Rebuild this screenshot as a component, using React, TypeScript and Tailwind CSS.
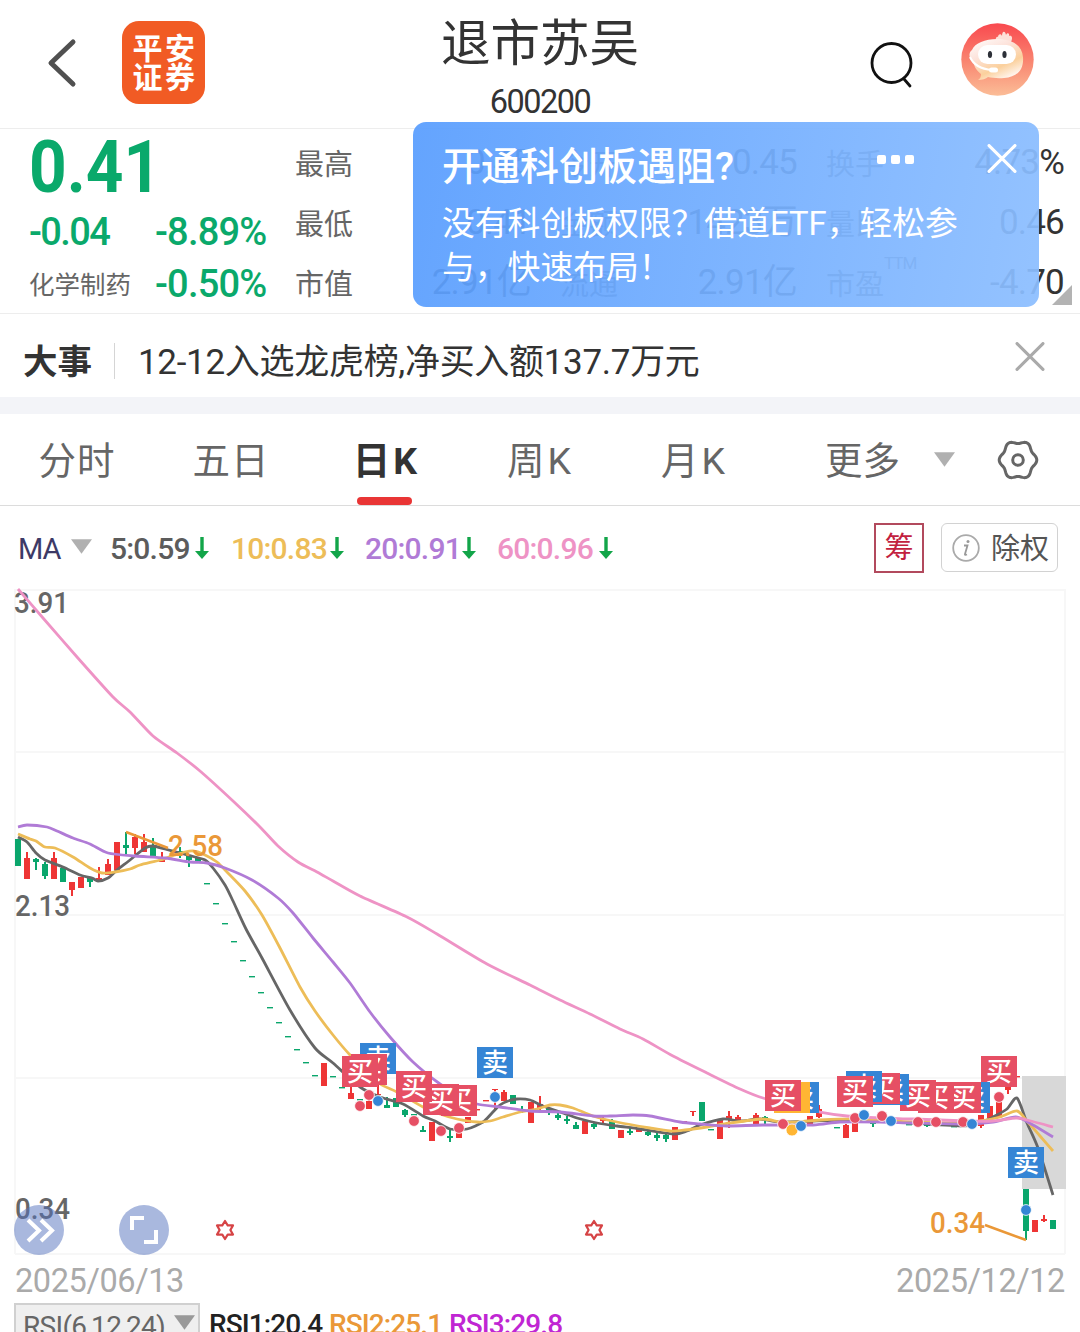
import type { ReactNode } from "react";

type Candle = [x: number, up: 0 | 1, high: number, low: number, top: number, bottom: number];
type Marker = [x: number, y: number, kind: "buy" | "sell" | "both"];

const RED = "#ee3535";
const GREEN = "#0aa66c";

const COLORS = { buy: "#e64f64", sell: "#3585d5", both: "#ffb533" };

const MA60 =
  "18,589 43,618 77,657 113,697 130,712 153,736 177,753 200,771 233,801 260,827 278,846 298,862 317,872 333,881 360,896 407,917 437,934 487,964 530,985 560,1000 590,1014 620,1029 643,1039 673,1056 707,1073 740,1089 763,1098 800,1107 820,1112 847,1116 880,1118 913,1119 967,1121 993,1121 1016,1118 1027,1120 1053,1127";
const MA20 =
  "18,827 27,825 47,827 57,831 73,838 90,844 108,853 135,856 165,858 190,862 207,863 225,868 252,880 278,898 293,913 313,938 333,962 350,983 370,1012 390,1037 413,1062 440,1084 460,1096 477,1104 500,1107 530,1111 560,1112 593,1116 610,1116 633,1115 650,1116 680,1122 700,1124 727,1126 763,1125 813,1125 840,1122 880,1122 913,1123 963,1124 993,1122 1016,1117 1033,1125 1053,1137";
const MA10 =
  "18,834 30,839 36,841 45,847 55,848 73,857 90,868 102,873 115,872 130,869 140,865 160,860 175,855 185,852 193,851 203,854 217,862 227,872 245,891 262,915 280,948 300,987 315,1011 333,1035 350,1055 377,1082 397,1092 423,1107 440,1114 457,1119 477,1122 490,1121 503,1117 520,1112 537,1109 550,1105 560,1105 573,1108 593,1116 617,1122 650,1128 670,1131 685,1130 707,1127 730,1123 763,1119 780,1122 797,1122 820,1120 860,1119 913,1122 963,1123 980,1121 1000,1117 1017,1111 1027,1121 1040,1136 1053,1151";
const MA5 =
  "18,837 27,842 36,853 45,860 63,867 80,875 92,878 98,881 108,878 117,870 130,860 145,848 153,846 165,849 180,853 195,857 205,860 213,868 225,885 233,901 246,929 262,958 290,1010 315,1048 333,1063 360,1087 380,1097 403,1104 423,1116 435,1121 450,1129 467,1129 483,1122 492,1113 500,1105 508,1101 517,1099 530,1100 543,1106 563,1113 577,1118 597,1123 617,1126 640,1129 673,1134 687,1131 700,1125 723,1119 740,1121 760,1119 780,1122 813,1121 847,1120 880,1121 913,1123 963,1126 980,1123 993,1117 1007,1109 1017,1098 1027,1123 1038,1148 1053,1195";

const candles: Candle[] = [
  [18, 0, 839, 866, 839, 866],
  [27, 1, 852, 879, 858, 879],
  [36, 0, 858, 870, 859, 862],
  [45, 0, 862, 879, 864, 876],
  [54, 1, 852, 879, 858, 879],
  [63, 0, 867, 882, 868, 882],
  [72, 1, 882, 896, 882, 890],
  [81, 1, 877, 888, 877, 888],
  [90, 0, 878, 887, 878, 882],
  [99, 1, 867, 882, 878, 882],
  [108, 1, 859, 875, 864, 875],
  [117, 1, 842, 870, 842, 870],
  [126, 0, 832, 855, 845, 848],
  [135, 1, 834, 854, 837, 848],
  [144, 1, 834, 852, 842, 852],
  [153, 0, 838, 858, 846, 858],
  [162, 1, 852, 862, 858, 862],
  [180, 0, 847, 858, 851, 855],
  [189, 0, 855, 867, 856, 860],
  [198, 0, 857, 862, 858, 862],
  [324, 1, 1063, 1086, 1063, 1086],
  [351, 1, 1085, 1099, 1093, 1099],
  [369, 1, 1095, 1109, 1101, 1109],
  [378, 1, 1082, 1095, 1094, 1095],
  [387, 0, 1097, 1108, 1105, 1108],
  [396, 0, 1098, 1107, 1098, 1107],
  [405, 0, 1109, 1117, 1110, 1115],
  [423, 0, 1126, 1132, 1130, 1132],
  [432, 1, 1122, 1141, 1122, 1141],
  [450, 0, 1128, 1142, 1136, 1138],
  [459, 1, 1130, 1138, 1133, 1138],
  [468, 1, 1117, 1123, 1117, 1123],
  [495, 1, 1089, 1110, 1089, 1090],
  [504, 1, 1090, 1101, 1092, 1101],
  [513, 0, 1095, 1104, 1095, 1104],
  [522, 0, 1106, 1113, 1109, 1111],
  [531, 1, 1102, 1123, 1102, 1123],
  [540, 1, 1096, 1111, 1104, 1108],
  [549, 0, 1107, 1115, 1108, 1112],
  [558, 0, 1113, 1120, 1115, 1118],
  [567, 0, 1116, 1124, 1119, 1121],
  [576, 0, 1122, 1129, 1125, 1129],
  [585, 1, 1121, 1134, 1121, 1134],
  [594, 0, 1123, 1129, 1124, 1127],
  [603, 1, 1117, 1123, 1119, 1121],
  [612, 0, 1119, 1129, 1121, 1129],
  [621, 1, 1130, 1138, 1130, 1138],
  [630, 0, 1128, 1135, 1131, 1133],
  [639, 1, 1128, 1132, 1129, 1132],
  [648, 0, 1130, 1136, 1132, 1135],
  [657, 0, 1133, 1141, 1135, 1138],
  [666, 0, 1133, 1142, 1135, 1139],
  [675, 1, 1127, 1140, 1127, 1140],
  [693, 1, 1111, 1116, 1111, 1112],
  [702, 0, 1102, 1121, 1102, 1121],
  [720, 1, 1120, 1139, 1120, 1139],
  [729, 1, 1111, 1128, 1116, 1120],
  [738, 1, 1115, 1122, 1117, 1122],
  [756, 1, 1113, 1124, 1115, 1124],
  [765, 0, 1116, 1124, 1117, 1118],
  [810, 1, 1116, 1126, 1116, 1126],
  [819, 1, 1105, 1118, 1109, 1117],
  [846, 1, 1124, 1138, 1125, 1138],
  [855, 1, 1122, 1132, 1122, 1132],
  [873, 0, 1122, 1127, 1123, 1124],
  [927, 0, 1122, 1127, 1124, 1126],
  [981, 1, 1115, 1128, 1115, 1126],
  [990, 1, 1106, 1118, 1106, 1118],
  [999, 1, 1102, 1117, 1102, 1117],
  [1008, 1, 1086, 1094, 1087, 1090],
  [1026, 0, 1189, 1240, 1189, 1231],
  [1035, 1, 1220, 1232, 1220, 1232],
  [1044, 1, 1215, 1222, 1219, 1221],
  [1053, 0, 1220, 1229, 1220, 1229],
];

// sesiones sin rango: solo un guion horizontal
const flats: [number, number, 0 | 1][] = [
  [207, 883, 0],
  [216, 903, 0],
  [225, 923, 0],
  [234, 941, 0],
  [243, 960, 0],
  [252, 976, 0],
  [261, 992, 0],
  [270, 1007, 0],
  [279, 1022, 0],
  [288, 1036, 0],
  [297, 1049, 0],
  [306, 1062, 0],
  [315, 1075, 0],
  [333, 1076, 0],
  [342, 1087, 0],
  [360, 1099, 0],
  [414, 1114, 0],
  [477, 1109, 1],
  [486, 1100, 1],
  [684, 1121, 1],
  [711, 1129, 0],
  [747, 1120, 0],
  [837, 1127, 0],
  [909, 1124, 0],
  [954, 1126, 0],
  [1017, 1076, 1],
];

const dots: Marker[] = [
  [360, 1106, "buy"],
  [369, 1095, "buy"],
  [378, 1101, "sell"],
  [414, 1121, "buy"],
  [441, 1131, "buy"],
  [459, 1128, "buy"],
  [495, 1097, "sell"],
  [783, 1124, "buy"],
  [792, 1130, "both"],
  [801, 1126, "sell"],
  [855, 1118, "buy"],
  [864, 1115, "sell"],
  [882, 1116, "buy"],
  [891, 1121, "sell"],
  [918, 1122, "buy"],
  [936, 1122, "buy"],
  [963, 1122, "buy"],
  [972, 1124, "sell"],
  [999, 1097, "buy"],
  [1026, 1210, "sell"],
];

const flags: Marker[] = [
  [1008, 1147, "sell"],
  [981, 1056, "buy"],
  [954, 1082, "sell"],
  [945, 1082, "buy"],
  [918, 1082, "buy"],
  [900, 1080, "buy"],
  [873, 1074, "sell"],
  [864, 1073, "buy"],
  [846, 1071, "sell"],
  [837, 1076, "buy"],
  [783, 1082, "sell"],
  [774, 1082, "both"],
  [765, 1080, "buy"],
  [477, 1047, "sell"],
  [441, 1085, "buy"],
  [423, 1084, "buy"],
  [396, 1071, "buy"],
  [360, 1043, "sell"],
  [351, 1054, "buy"],
  [342, 1056, "buy"],
];

const stats = [
  { label: "最高", value: "0.45" },
  { label: "今开", value: "0.45" },
  { label: "换手", value: "4.73%" },
  { label: "最低", value: "0.41" },
  { label: "金额", value: "1423万" },
  { label: "量比", value: "0.46" },
  { label: "市值", value: "2.91亿" },
  { label: "流通", value: "2.91亿" },
  { label: "市盈", value: "-4.70", sup: "TTM" },
];

const averages = [
  { text: "5:0.59", className: "w-[79px] text-[#5c5c5c]", arrow: "ml-[6px] mr-[22px]" },
  { text: "10:0.83", className: "w-[96px] text-[#edbd58]", arrow: "ml-[3px] mr-[21px]" },
  { text: "20:0.91", className: "w-[96px] text-[#b07bd6]", arrow: "ml-[1px] mr-[21px]" },
  { text: "60:0.96", className: "w-[96px] text-[#ee93c5]", arrow: "ml-[6px]" },
];

const tabs = ["分时", "五日", "日K", "周K", "月K"];

// Catmull-Rom a Bézier, para que las medias no se vean quebradas
function smooth(points: string) {
  const p = points.split(" ").map((s) => s.split(",").map(Number));
  let d = `M${p[0][0]} ${p[0][1]}`;
  for (let i = 0; i < p.length - 1; i++) {
    const a = p[i - 1] ?? p[i];
    const b = p[i];
    const c = p[i + 1];
    const e = p[i + 2] ?? c;
    d += `C${b[0] + (c[0] - a[0]) / 8} ${b[1] + (c[1] - a[1]) / 8} ${c[0] - (e[0] - b[0]) / 8} ${c[1] - (e[1] - b[1]) / 8} ${c[0]} ${c[1]}`;
  }
  return d;
}

// contorno de seis lóbulos del engranaje
const gear =
  "M" +
  Array.from({ length: 72 }, (_, i) => {
    const t = (i * Math.PI) / 36;
    const r = 17.3 + 1.5 * Math.cos(6 * t);
    return `${(21 + r * Math.cos(t)).toFixed(2)} ${(21 + 1.04 * r * Math.sin(t)).toFixed(2)}`;
  }).join("L") +
  "z";

function Cross({ className }: { className: string }) {
  return (
    <svg viewBox="0 0 28 28" className={className} fill="none" stroke="currentColor" strokeLinecap="round">
      <path d="M1.500 1.500 26.500 26.500M26.500 1.500 1.500 26.500" />
    </svg>
  );
}

function Caret({ className }: { className: string }) {
  return (
    <svg viewBox="0 0 22 15" className={className} fill="currentColor">
      <path d="M0 0h22L11 15z" />
    </svg>
  );
}

function Avatar() {
  return (
    <svg viewBox="0 0 73 73" className="h-[73px] w-[73px]">
      <defs>
        <linearGradient id="sky" x1="0" y1="0" x2="0" y2="1">
          <stop offset="0" stopColor="#f9494f" />
          <stop offset="0.55" stopColor="#f98872" />
          <stop offset="1" stopColor="#fbbd97" />
        </linearGradient>
        <linearGradient id="head" x1="0" y1="0" x2="0.6" y2="1">
          <stop offset="0" stopColor="#fff" />
          <stop offset="0.4" stopColor="#fde3db" />
          <stop offset="0.75" stopColor="#fbd09c" />
          <stop offset="1" stopColor="#fff3ea" />
        </linearGradient>
      </defs>
      <circle cx="36.5" cy="36.5" r="36.2" fill="url(#sky)" />
      <path d="M35 18c-1-3 1-5 2-4 0-3 3-4 4-1 0-5 3-6 4-1 1-3 4-2 3 1 3-1 4 2 2 6z" fill="#fde0d8" />
      <path
        d="M11 27c3-7 13-11 25-11 15 0 25 6 26 18 1 13-6 20-19 21-6 .5-12 0-16-1-2 2-6 3-10 3 2-1 3-3 3-6-5-4-7-8-8-13-4-2-5-8-1-11z"
        fill="url(#head)"
      />
      <rect x="17" y="22" width="38" height="19" rx="9.5" fill="#fff" />
      <ellipse cx="29" cy="31.5" rx="2.1" ry="3.600" fill="#2d3038" />
      <ellipse cx="43.500" cy="31.5" rx="2.1" ry="3.600" fill="#2d3038" />
      <path d="M9 34c3 7 11 12 22 13" fill="none" stroke="#fff" strokeWidth="2" />
      <rect x="28" y="44.500" width="9" height="5" rx="2.500" fill="#fff" />
    </svg>
  );
}

function Header() {
  return (
    <header className="grid h-[129px] grid-cols-[1fr_auto_1fr] border-b border-[#ededed]">
      <div className="flex items-start pl-[47px]">
        <svg viewBox="0 0 30 50" className="mt-[38px] h-[50px] w-[30px]" fill="none" stroke="#505050" strokeWidth="5" strokeLinecap="round">
          <path d="M26 4 4 25 26 46" strokeLinejoin="round" />
        </svg>
        <div className="mt-[21px] ml-[45px] flex h-[83px] w-[83px] flex-col items-center justify-center rounded-[17px] bg-[#f15b24] text-[30px] leading-[29px] font-bold tracking-[2.5px] text-white">
          <span className="pl-[3px]">平安</span>
          <span className="pl-[3px]">证券</span>
        </div>
      </div>
      <div className="flex flex-col items-center">
        <h1 className="mt-[14px] text-[49.5px] leading-[60px] text-[#333]">退市苏吴</h1>
        <p className="mt-[10px] text-[32.5px] leading-[36px] tracking-[-1.5px] text-[#333]">600200</p>
      </div>
      <div className="flex items-start justify-end pr-[46px]">
        <svg viewBox="0 0 46 48" className="mt-[41px] h-[48px] w-[46px]" fill="none" stroke="#111" strokeWidth="2.800" strokeLinecap="round">
          <circle cx="22.500" cy="22" r="19.500" />
          <path d="m35 38 6 7" />
        </svg>
        <div className="mt-[23px] ml-[46px]">
          <Avatar />
        </div>
      </div>
    </header>
  );
}

function Promo() {
  return (
    <div className="absolute top-[-7px] left-[413px] h-[185px] w-[626px] rounded-[13px] bg-linear-100 from-[#589dfe]/93 to-[#8cbeff]/93 pl-[29px] text-white">
      <div className="flex h-[76px] items-center pt-[10px]">
        <h2 className="w-[435px] pt-[4px] text-[39px] leading-[48px] font-medium whitespace-nowrap">开通科创板遇阻?</h2>
        <div className="-mt-[12px] flex gap-[5px]">
          <i className="h-[9px] w-[9px] rounded-[2px] bg-white" />
          <i className="h-[9px] w-[9px] rounded-[2px] bg-white" />
          <i className="h-[9px] w-[9px] rounded-[2px] bg-white" />
        </div>
        <Cross className="-mt-[13px] ml-[73px] h-[29px] w-[30px] stroke-3" />
      </div>
      <p className="w-[560px] pt-[4px] text-[32.8px] leading-[44px] whitespace-nowrap">
        没有科创板权限？借道ETF，轻松参
        <br />
        与，快速布局！
      </p>
    </div>
  );
}

function Quote() {
  return (
    <section className="relative flex h-[185px] border-b border-[#ededed]">
      <div className="w-[295px] pl-[29px] text-[#0aa96b]">
        <div className="h-[77px]">
          <span className="inline-block origin-left scale-x-[0.9] text-[73px] leading-[76px] font-bold">0.41</span>
        </div>
        <div className="flex h-[52px] items-center text-[38px] font-medium tracking-[-0.8px]">
          <span className="w-[126px] tracking-[-1.6px]">-0.04</span>
          <span>-8.89%</span>
        </div>
        <div className="flex h-[52px] items-center text-[38px] font-medium tracking-[-0.8px]">
          <span className="w-[126px] pt-[2px] text-[25.5px] font-normal tracking-normal text-[#666]">化学制药</span>
          <span>-0.50%</span>
        </div>
      </div>
      <dl className="grid h-[184px] grid-cols-[236px_237px_238px] grid-rows-[60px_60px_60px] gap-x-[29px] pt-[4px]">
        {stats.map((s) => (
          <div key={s.label} className="flex items-center justify-between">
            <dt className="pt-[5px] text-[29px] text-[#666]">
              {s.label}
              {s.sup && <sup className="-top-[26px] text-[17px] tracking-[-1px]">{s.sup}</sup>}
            </dt>
            <dd className="pt-[1px] text-[35px] tracking-[-0.8px] text-[#333]">{s.value}</dd>
          </div>
        ))}
      </dl>
      <svg viewBox="0 0 20 20" className="absolute right-[8px] bottom-[8px] h-[20px] w-[20px]" fill="#b3b3b3">
        <path d="M20 0v20H0z" />
      </svg>
      <Promo />
    </section>
  );
}

function News() {
  return (
    <section className="flex h-[83px] items-center pt-[11px] pr-[35px] pl-[23px] text-[#333]">
      <strong className="pt-[4px] text-[34.5px] font-bold">大事</strong>
      <i className="mr-[23px] ml-[22px] h-[36px] w-px bg-[#d5d5d5]" />
      <p className="grow pt-[4px] text-[35px] tracking-[-0.3px] whitespace-nowrap">12-12入选龙虎榜,净买入额137.7万元</p>
      <Cross className="-mt-[10px] h-[29px] w-[30px] stroke-3 text-[#aaa]" />
    </section>
  );
}

function Tabs() {
  return (
    <nav className="flex h-[92px] border-b border-[#dcdcdc] text-[37.5px] text-[#666]">
      {tabs.map((t) => (
        <div
          key={t}
          className={`relative flex w-[154px] items-center justify-center pt-[3px] ${
            t === "日K" ? "font-bold text-[#333]" : ""
          } ${t.endsWith("K") ? "pl-[3px] tracking-[3px]" : "tracking-[1px]"}`}
        >
          {t}
          {t === "日K" && <i className="absolute bottom-0 left-[49px] h-[8px] w-[55px] rounded-[4px] bg-[#e93535]" />}
        </div>
      ))}
      <div className="flex items-center pl-[55px]">
        <span className="pt-[3px]">更多</span>
        <Caret className="ml-[34px] h-[15px] w-[21px] text-[#b0b0b0]" />
        <svg viewBox="0 0 42 42" className="ml-[42px] h-[42px] w-[42px]" fill="none" stroke="#666" strokeWidth="3" strokeLinejoin="round">
          <path d={gear} />
          <circle cx="21" cy="21" r="5.300" />
        </svg>
      </div>
    </nav>
  );
}

function Averages() {
  return (
    <div className="flex h-[82px] items-center pt-[1px] pr-[22px] pl-[18px] text-[30px]">
      <span className="w-[53px] pt-[4px] text-[29px] tracking-[-1px] text-[#3d3a66]">MA</span>
      <Caret className="-mt-[3px] mr-[18px] h-[15px] w-[21px] text-[#b0b0b0]" />
      {averages.map((a) => (
        <div key={a.text} className="flex items-center">
          <span className={`pt-[1px] font-medium tracking-[-0.8px] whitespace-nowrap ${a.className}`}>{a.text}</span>
          <svg viewBox="0 0 14 22" className={`h-[22px] w-[14px] ${a.arrow}`}>
            <path d="M5.300 0h3.400v14H14l-7 8-7-8h5.300z" fill="#12a549" />
          </svg>
        </div>
      ))}
      <span className="ml-auto flex h-[50px] w-[50px] items-center justify-center border-2 border-[#b24a5d] pt-[3px] text-[29px] text-[#c2213f]">
        筹
      </span>
      <span className="ml-[17px] flex h-[49px] w-[117px] items-center rounded-[6px] border-[1.500px] border-[#d2d2d2] pl-[10px] text-[29px] text-[#555]">
        <svg viewBox="0 0 28 28" className="mr-[11px] h-[28px] w-[28px]">
          <circle cx="14" cy="14" r="12.800" fill="none" stroke="#aaa" strokeWidth="1.800" />
          <path d="M12 11.500h3.500L13 20q-.4 1.500 2 .5" fill="none" stroke="#999" strokeWidth="1.800" />
          <circle cx="16" cy="7.500" r="1.500" fill="#999" />
        </svg>
        <span className="pt-[4px]">除权</span>
      </span>
    </div>
  );
}

function Line({ points, color }: { points: string; color: string }) {
  return <path d={smooth(points)} fill="none" stroke={color} strokeWidth="2.800" strokeLinejoin="round" />;
}

function AxisLabel({ x, y, fill, children }: { x: number; y: number; fill: string; children: ReactNode }) {
  return (
    <text x={x} y={y} fill={fill} textLength="55" lengthAdjust="spacingAndGlyphs" className="text-[30px] font-medium">
      {children}
    </text>
  );
}

function Chart() {
  return (
    <svg viewBox="0 588 1080 674" className="block h-[674px] w-[1080px]">
      <g stroke="#f7f7f7" strokeWidth="2">
        <path d="M15 590H1065M15 752H1065M15 915H1065M15 1078H1065M15 1254H1065M15 589V1254M1065 589V1254" />
      </g>
      <rect x="1022" y="1076" width="44" height="113" fill="#d8d8d8" />

      <AxisLabel x={14} y={613} fill="#666">3.91</AxisLabel>
      <AxisLabel x={15} y={916} fill="#666">2.13</AxisLabel>
      <AxisLabel x={15} y={1219} fill="#666">0.34</AxisLabel>

      {candles.map(([x, up, high, low, top, bottom]) => (
        <g key={x} fill={up ? RED : GREEN}>
          <rect x={x - 1} y={high} width="2" height={low - high} />
          <rect x={x - 3} y={top} width="6" height={bottom - top} />
        </g>
      ))}
      {flats.map(([x, y, up]) => (
        <rect key={x} x={x - 3} y={y} width="6" height="1.400" fill={up ? RED : GREEN} />
      ))}

      <Line points={MA5} color="#666" />
      <Line points={MA10} color="#edbd58" />
      <Line points={MA20} color="#b07bd6" />
      <Line points={MA60} color="#ee93c5" />

      <g stroke="#ea9838" strokeWidth="2.600">
        <path d="M126 832 168 848M985 1225 1026 1240" />
      </g>
      <AxisLabel x={168} y={856} fill="#ea9838">2.58</AxisLabel>
      <AxisLabel x={930} y={1233} fill="#ea9838">0.34</AxisLabel>

      {flags.map(([x, y, kind]) => (
        <g key={x}>
          <rect x={x} y={y} width="36" height="31" fill={COLORS[kind]} />
          <text x={x + 18} y={y + 25} textAnchor="middle" fill="#fff" className="text-[26px] font-medium">
            {kind === "sell" ? "卖" : kind === "buy" ? "买" : ""}
          </text>
        </g>
      ))}
      {dots.map(([x, y, kind]) => (
        <circle key={x} cx={x} cy={y} r={kind === "both" ? 6 : 5.4} fill={COLORS[kind]} stroke="#fff" strokeWidth="0.800" />
      ))}

      {[225, 594].map((x) => (
        <path
          key={x}
          transform={`translate(${x} 1230)`}
          d="M0-9 2.700-4.600H8L5.400 0 8 4.600H2.700L0 9-2.700 4.600H-8L-5.400 0-8-4.600H-2.700z"
          fill="none"
          stroke="#d64446"
          strokeWidth="2.200"
          strokeLinejoin="round"
        />
      ))}

      <g fill="#5471bd" fillOpacity="0.5">
        <circle cx="39" cy="1230" r="25" />
        <circle cx="144" cy="1230" r="25" />
      </g>
      <g fill="none" stroke="#fff" strokeWidth="4">
        <path d="m28 1220 11 10.500-11 10.500M41 1220l11 10.500-11 10.500" />
        <path d="M132 1230v-12h12M156 1230v12h-12" />
      </g>
    </svg>
  );
}

function Footer() {
  return (
    <>
      <div className="flex h-[41px] items-center justify-between px-[15px] pb-[2px] text-[32.500px] tracking-[-0.4px] text-[#aaa]">
        <span>2025/06/13</span>
        <span>2025/12/12</span>
      </div>
      <div className="flex pl-[14px] text-[28px] leading-[44px] font-medium whitespace-nowrap">
        <div className="mr-[9px] flex h-[50px] w-[186px] border-2 border-[#d0d0d0] bg-[#efefef] pl-[7px] font-normal tracking-[-0.7px] text-[#666]">
          <span className="w-[151px]">RSI(6,12,24)</span>
          <Caret className="mt-[9px] h-[17px] w-[21px] shrink-0 text-[#999]" />
        </div>
        <span className="w-[120px] tracking-[-0.9px] text-[#222]">RSI1:20.4</span>
        <span className="w-[120px] tracking-[-0.9px] text-[#ea9838]">RSI2:25.1</span>
        <span className="tracking-[-0.9px] text-[#c026d3]">RSI3:29.8</span>
      </div>
    </>
  );
}

export default function App() {
  return (
    <main className="h-[1332px] w-[1080px] overflow-hidden bg-white font-[Roboto,'Noto_Sans_CJK_SC',sans-serif]">
      <Header />
      <Quote />
      <News />
      <div className="h-[17px] bg-[#f3f4f8]" />
      <Tabs />
      <Averages />
      <Chart />
      <Footer />
    </main>
  );
}
